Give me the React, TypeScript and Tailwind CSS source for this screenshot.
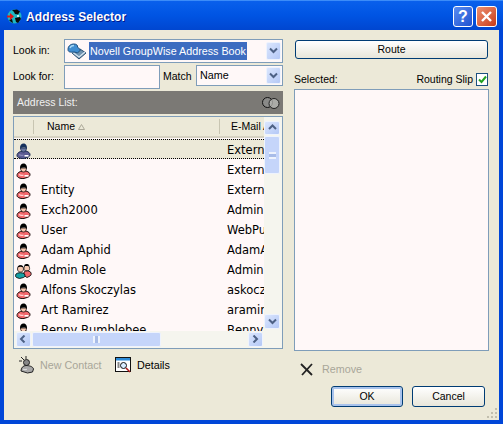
import React from "react";

const ui = { fontFamily: '"Liberation Sans", "Noto Sans", sans-serif' };
const listFont = { fontFamily: '"DejaVu Sans", "Noto Sans", sans-serif' };

function Person({ body = "#f2686c", light = "#ffd0d0", face = "#f6c8b0", line = "#1a0a0a", hair = "#000" }: { body?: string; light?: string; face?: string; line?: string; hair?: string }) {
  return (
    <svg width="15" height="16" viewBox="0 0 15 16" className="shrink-0">
      <path d="M4.500 8.500C1.800 9.500 1 11 1 12.500c0 1.200 1 2 3 2.700l3 .5 4.500-1.300c1.500-.6 2.500-1.500 2.500-2.700 0-1.500-1-2.700-4-3.700z" fill={body} stroke={line} strokeWidth="1" />
      <path d="M3 11.500c1.500 1 3.500 1 4.500.5" fill="none" stroke={light} strokeWidth="1.200" />
      <path d="M8.500 12h4v1.600h-4z" fill="#fff" />
      <path d="M4.500 5c0 2.300 1.300 4 3 4s3-1.700 3-4z" fill={face} stroke={line} strokeWidth=".8" />
      <path d="M4 5.500C3.800 2 5.500.5 7.500.5S11.200 2 11 5.500C9.500 4 6 4 4 5.500z" fill={hair} />
    </svg>
  );
}

function Group() {
  return (
    <svg width="17" height="16" viewBox="0 0 17 16" className="shrink-0">
      <path d="M9 5.500c0-2 1-3.500 2.800-3.500s2.800 1.500 2.800 3.500-1.200 2.500-2.800 2.500S9 7.500 9 5.500z" fill="#f6c8b0" stroke="#111" strokeWidth=".8" />
      <path d="M9 2.500c1-2 4.500-2 5.500 0-1.500.8-4 .8-5.500 0z" fill="#000" />
      <path d="M9 9c2-1.500 4.500-1.500 6.500 0 1 1.500 1 3-.5 4l-3 1.500-3-2z" fill="#f2686c" stroke="#111" strokeWidth=".9" />
      <path d="M2.500 6c0-2 1.200-3.500 3-3.500s3 1.500 3 3.500-1.300 3-3 3-3-1-3-3z" fill="#f6c8b0" stroke="#111" strokeWidth=".8" />
      <path d="M2.500 4.500c.5-3 5.500-3 6 0-2-1-4-1-6 0z" fill="#000" />
      <path d="M1 11c1.500-1.700 7-1.700 8.500 0 1 1.500 .5 3-1 3.500l-4 1-3-1C.5 14 .3 12.500 1 11z" fill="#14a0a4" stroke="#111" strokeWidth=".9" />
    </svg>
  );
}

function Chevron({ dir }: { dir: "up" | "down" | "left" | "right" }) {
  const d = {
    down: "M1 1.500L4.500 5L8 1.500",
    up: "M1 5L4.500 1.500L8 5",
    left: "M5.500 .5L2 4L5.500 7.500",
    right: "M2.500 .5L6 4L2.500 7.500",
  }[dir];
  return (
    <svg width="9" height="8" viewBox="0 0 9 8">
      <path d={d} fill="none" stroke="#4d6185" strokeWidth="2" />
    </svg>
  );
}

function ScrollBtn({ dir, className = "" }: { dir: "up" | "down" | "left" | "right"; className?: string }) {
  return (
    <div className={`flex items-center justify-center rounded-[2px] border border-[#eef3fd] bg-gradient-to-br from-[#dbe6fd] to-[#b4c8f6] ${className}`}>
      <Chevron dir={dir} />
    </div>
  );
}

function Combo({ children, className = "", inset = "" }: { children: React.ReactNode; className?: string; inset?: string }) {
  return (
    <div className={`flex items-stretch border border-[#7f9db9] bg-[#fff8f8] ${className}`}>
      <div className="flex min-w-0 flex-1 items-center">{children}</div>
      <ScrollBtn dir="down" className={`mr-[1px] w-[15px] shrink-0 ${inset}`} />
    </div>
  );
}

function Button({ children, className = "", def = false }: { children: React.ReactNode; className?: string; def?: boolean }) {
  return (
    <div
      className={`flex items-center justify-center rounded-[3px] border border-[#003c74] bg-gradient-to-b from-white to-[#e8e6da] text-[10.500px] text-black ${
        def ? "shadow-[inset_0_0_0_2px_#a9c3ec]" : ""
      } ${className}`}
    >
      {children}
    </div>
  );
}

const rows: [string, string, string?][] = [
  ["", "Extern", "sel"],
  ["", "Extern"],
  ["Entity", "Extern"],
  ["Exch2000", "Admin"],
  ["User", "WebPu"],
  ["Adam Aphid", "AdamA"],
  ["Admin Role", "Admin", "group"],
  ["Alfons Skoczylas", "askocz"],
  ["Art Ramirez", "aramir"],
  ["Benny Bumblebee", "BennyB"],
];

export default function App() {
  return (
    <div className="flex h-[424px] w-[503px] flex-col overflow-hidden bg-[#0046d8] text-black" style={ui}>
      {/* title bar */}
      <div className="flex h-[30px] shrink-0 items-center border-t border-[#3c8cf8] bg-gradient-to-b from-[#0a60ec] via-[#0054e3] to-[#0046d0] pl-[7px] pr-[6px] pt-[2px]">
        <svg width="15" height="15" viewBox="0 0 15 15" className="shrink-0">
          <circle cx="7.500" cy="7.500" r="7" fill="#1fb8c4" />
          <path d="M5 1l5-.5 3 2-2 3-3-.5-1-2zM8 9l5-1 1 2-3 4-2-1zM2 11l3-1 1 4-2-1z" fill="#0a0a0a" />
          <path d="M0 6.500l3 0 0-2.500 4 3.500-4 3.500 0-2.500-3 0z" fill="#e01818" />
          <circle cx="11" cy="7" r="1" fill="#fff" />
        </svg>
        <span className="ml-[4px] text-[12px] font-bold tracking-[0.1px] text-white [text-shadow:1px_1px_0_#00188a]">
          Address Selector
        </span>
        <div className="ml-auto flex items-center gap-[3px]">
          <div className="flex h-[21px] w-[20px] items-center justify-center rounded-[3px] border border-white bg-gradient-to-br from-[#5a8cf0] to-[#2050d0] text-[16px] font-bold leading-none text-white">?</div>
          <div className="flex h-[21px] w-[21px] items-center justify-center rounded-[3px] border border-white bg-gradient-to-br from-[#ec9070] to-[#c83810]">
            <svg width="13" height="13" viewBox="0 0 13 13"><path d="M2 2l9 9M11 2l-9 9" stroke="#fff" strokeWidth="2.400" /></svg>
          </div>
        </div>
      </div>

      {/* client */}
      <div className="relative flex min-h-0 flex-1 flex-col border-x-[4px] border-b-[4px] border-[#0046d8] bg-[#ece9d8]">
        <div className="flex min-h-0 flex-1 pl-[9px] pt-[9px]">
          {/* left column */}
          <div className="flex w-[270px] shrink-0 flex-col">
            <div className="flex h-[24px] items-center">
              <span className="w-[51px] text-[10.500px]">Look in:</span>
              <Combo className="h-[24px] flex-1" inset="my-[2px]">
                <svg width="20" height="17" viewBox="0 0 20 17" className="ml-[2px] shrink-0">
                  <path d="M5 10l7 6 7-6-6-4z" fill="#6f93b0" stroke="#2b4f70" />
                  <path d="M4 8l8 6 6-5" fill="none" stroke="#d6e4ef" strokeWidth="1.300" />
                  <path d="M1 6.500C1 3 3.500 1 7 1c2.500 0 4 1.500 3.500 3l3 3-3 3-3-1C3 9.500 1 9 1 6.500z" fill="#3f8dd0" stroke="#1f4f7d" />
                  <path d="M3 5c.5-1.500 2-2.500 4-2.500" fill="none" stroke="#a8d8f5" strokeWidth="1.300" />
                </svg>
                <span className="ml-[2px] flex h-[18px] items-center whitespace-nowrap bg-[#3d6cc0] px-[1px] text-[10.750px] text-white">Novell GroupWise Address Book</span>
              </Combo>
            </div>
            <div className="mt-[2px] flex h-[24px] items-center">
              <span className="w-[51px] text-[10.500px]">Look for:</span>
              <div className="h-[24px] w-[96px] border border-[#7f9db9] bg-[#fff8f8]" />
              <span className="ml-[3px] w-[33px] text-[10.500px]">Match</span>
              <Combo className="h-[21px] flex-1 self-start" inset="my-[1px]">
                <span className="pl-[3px] text-[10.750px]">Name</span>
              </Combo>
            </div>
            <div className="mt-[2px] flex h-[23px] items-center justify-between bg-[#7b7975] pl-[4px] pr-[2px]">
              <span className="text-[10.500px] text-[#f0f0f0]">Address List:</span>
              <svg width="20" height="14" viewBox="0 0 20 14">
                <circle cx="6.500" cy="6.500" r="5" fill="#8a8a88" stroke="#111" />
                <circle cx="13" cy="7.500" r="5" fill="#c0c0bc" fillOpacity=".7" stroke="#222" />
              </svg>
            </div>

            {/* list */}
            <div className="mt-[2px] flex h-[233px] flex-col border border-[#7f9db9] bg-[#fff8f8]">
              <div className="relative flex min-h-0 flex-1">
                <div className="flex min-w-0 flex-1 flex-col overflow-hidden">
                  <div className="flex h-[21px] shrink-0 items-center border-b-[2px] border-[#d6d2c2] bg-[#ece9d8] text-[10.500px]">
                    <div className="h-[14px] w-[20px] shrink-0 border-r border-[#c8c5b2]" />
                    <div className="flex w-[186px] shrink-0 items-center border-r border-[#c8c5b2] pl-[13px]">
                      Name
                      <svg width="7" height="6" viewBox="0 0 7 6" className="ml-[3px]"><path d="M3.500 .5L6.500 5.500H.5z" fill="none" stroke="#aca899" /></svg>
                    </div>
                    <span className="whitespace-nowrap pl-[11px]">E-Mail A</span>
                  </div>
                  <div className="flex min-h-0 flex-1 flex-col overflow-hidden pt-[1px] text-[11.500px]" style={listFont}>
                    {rows.map(([name, mail, kind], i) => (
                      <div
                        key={i}
                        className={`flex h-[20px] shrink-0 items-center pt-[4px] ${kind === "sel" ? "border-y border-dotted border-black bg-[#ece9d8]" : ""}`}
                      >
                        <div className={`flex w-[27px] shrink-0 ${kind === "group" ? "pl-[1px]" : "pl-[2px]"}`}>
                          {kind === "group" ? <Group /> : kind === "sel" ? <Person body="#5c5c92" light="#8888b8" face="#6a78a0" line="#1a2a50" hair="#16305c" /> : <Person />}
                        </div>
                        <span className="w-[186px] shrink-0 whitespace-nowrap">{name}</span>
                        <span className="whitespace-nowrap">{mail}</span>
                      </div>
                    ))}
                  </div>
                </div>
                {/* vertical scrollbar */}
                <div className="flex w-[18px] shrink-0 flex-col bg-[#f5f5ee] pb-[2px] pr-[2px] pt-[4px]">
                  <ScrollBtn dir="up" className="h-[14px] shrink-0" />
                  <div className="mt-[1px] flex h-[38px] shrink-0 items-center justify-center rounded-[2px] border border-[#eef3fd] bg-[#c5d5fa]">
                    <div className="h-[7px] w-[7px] border-y-2 border-[#eef3fd] bg-[#a8bce8]" />
                  </div>
                  <div className="flex-1" />
                  <ScrollBtn dir="down" className="h-[15px] shrink-0" />
                </div>
              </div>
              {/* horizontal scrollbar */}
              <div className="flex h-[17px] shrink-0 items-center bg-[#f5f5ee] pb-[1px] pl-[2px] pr-[19px]">
                <ScrollBtn dir="left" className="h-[15px] w-[15px] shrink-0" />
                <div className="ml-[1px] flex h-[15px] w-[129px] shrink-0 items-center justify-center rounded-[2px] border border-[#eef3fd] bg-[#c5d5fa]">
                  <div className="h-[7px] w-[7px] border-x-2 border-[#eef3fd] bg-[#a8bce8]" />
                </div>
                <div className="flex-1" />
                <ScrollBtn dir="right" className="h-[15px] w-[15px] shrink-0" />
              </div>
            </div>

            <div className="ml-[6px] mt-[6px] flex h-[20px] items-center text-[10.750px]">
              <svg width="16" height="18" viewBox="0 0 16 18">
                <path d="M2 1l3 3M7 0v3M0 5h3" stroke="#222" />
                <circle cx="7.500" cy="6.500" r="3" fill="#888" stroke="#222" />
                <path d="M2 15c0-3 2-5.500 5-5.500s7 1 7.500 3.500l-1 3-5 1z" fill="#a8a8a8" stroke="#222" />
                <path d="M4 13c1 1 3 1 4 0" stroke="#e8e8e8" fill="none" />
              </svg>
              <span className="ml-[5px] w-[75px] whitespace-nowrap text-[#a8a698]">New Contact</span>
              <svg width="17" height="16" viewBox="0 0 17 16">
                <rect x=".5" y=".5" width="15" height="14" fill="#fff" stroke="#111" />
                <rect x="1" y="1" width="14" height="2.500" fill="#2a8ad8" />
                <circle cx="8.500" cy="8.500" r="3" fill="#d8ecff" stroke="#111" />
                <path d="M11 11l4 4" stroke="#b01818" strokeWidth="1.600" />
                <path d="M2.500 6h2M2.500 8h2M2.500 10h2" stroke="#111" />
              </svg>
              <span className="ml-[5px]">Details</span>
            </div>
          </div>

          {/* right column */}
          <div className="ml-[11px] flex w-[195px] shrink-0 flex-col pt-[1px]">
            <Button className="mx-[1px] h-[19px] shrink-0">Route</Button>
            <div className="mt-[12px] flex h-[17px] shrink-0 items-center justify-between pr-[1px] text-[10.500px]">
              <span>Selected:</span>
              <div className="flex items-center">
                <span>Routing Slip</span>
                <div className="ml-[3px] flex h-[13px] w-[12px] items-center justify-center border border-[#1c5180] bg-white">
                  <svg width="9" height="9" viewBox="0 0 9 9"><path d="M1 4.500L3.500 7L8 1.500" fill="none" stroke="#21a121" strokeWidth="2" /></svg>
                </div>
              </div>
            </div>
            <div className="mt-[1px] h-[262px] shrink-0 border border-[#7f9db9] bg-[#fff8f8]" />
            <div className="mt-[9px] flex h-[18px] shrink-0 items-center pl-[6px] text-[10.750px]">
              <svg width="14" height="13" viewBox="0 0 14 13"><path d="M1 1l11 11M12 1L2 12" stroke="#222" strokeWidth="1.800" /></svg>
              <span className="ml-[8px] text-[#a8a698]">Remove</span>
            </div>
            <div className="mt-[8px] flex shrink-0 gap-[9px] pl-[37px]">
              <Button def className="h-[21px] w-[72px]">OK</Button>
              <Button className="h-[21px] w-[73px]">Cancel</Button>
            </div>
          </div>
        </div>
        {/* resize grip */}
        <div className="absolute bottom-[2px] right-[2px] grid grid-cols-3 gap-[2px]">
          {[0, 1, 2, 3, 4, 5, 6, 7, 8].map((i) => (
            <div key={i} className={`h-[2px] w-[2px] ${[0, 1, 3].includes(i) ? "bg-transparent" : "bg-[#c2bfae]"}`} />
          ))}
        </div>
      </div>
    </div>
  );
}
